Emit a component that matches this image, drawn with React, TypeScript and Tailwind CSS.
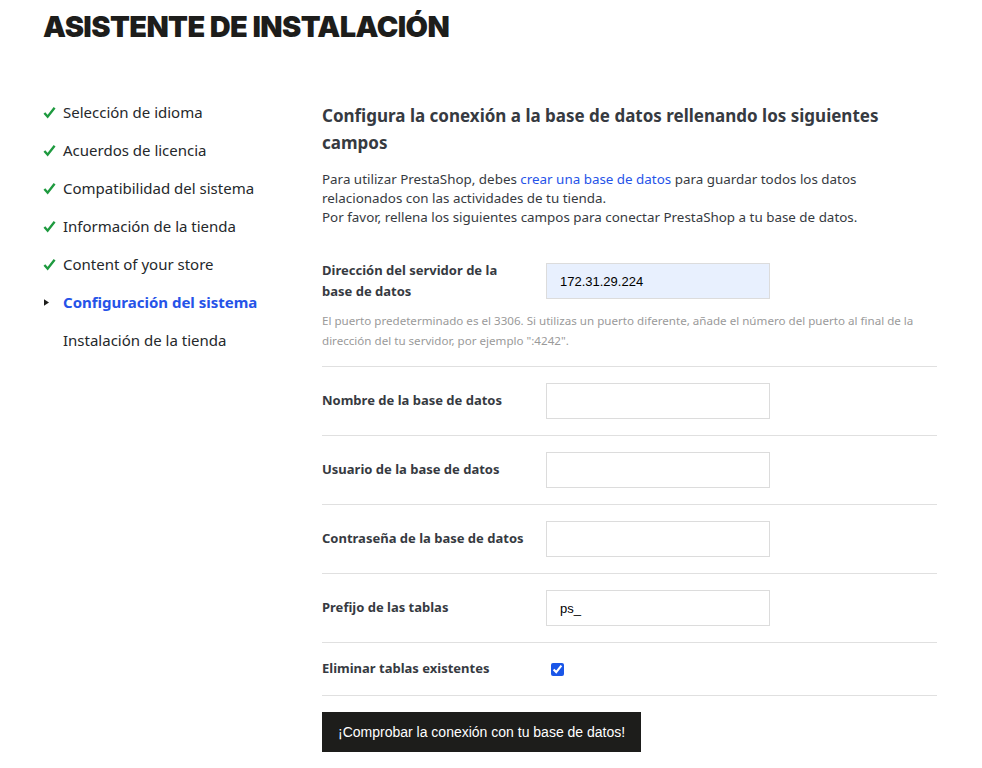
import React from 'react'

const steps = [
  { label: 'Selección de idioma', done: true },
  { label: 'Acuerdos de licencia', done: true },
  { label: 'Compatibilidad del sistema', done: true },
  { label: 'Información de la tienda', done: true },
  { label: 'Content of your store', done: true },
  { label: 'Configuración del sistema', current: true },
  { label: 'Instalación de la tienda' },
]

const fields = [
  { label: 'Nombre de la base de datos', value: '' },
  { label: 'Usuario de la base de datos', value: '' },
  { label: 'Contraseña de la base de datos', value: '', type: 'password' },
  { label: 'Prefijo de las tablas', value: 'ps_' },
]

const body = { fontFamily: '"Noto Sans", "Open Sans", sans-serif' }

export default function App() {
  return (
    <div className="min-h-screen bg-white text-[#363a41]" style={body}>
      <h1 className="pl-[43px] pt-[9px] text-[29px] leading-[36px] font-black tracking-[-0.6px] text-[#1d1d1b] font-['Inter',sans-serif]">
        ASISTENTE DE INSTALACIÓN
      </h1>

      <div className="flex pl-[43px] pt-[48px]">
        {/* Steps */}
        <ul className="w-[279px] shrink-0 text-[15px] leading-[22px]">
          {steps.map(step => (
            <li key={step.label} className="flex items-center h-[38px]">
              <span className="w-[20px] flex items-center">
                {step.done && (
                  <svg viewBox="0 0 14 14" className="w-[13px] h-[13px]">
                    <path d="M1.5 7.5 L5 11.5 L12.5 2" fill="none" stroke="#1e9a3f" strokeWidth="2.6" />
                  </svg>
                )}
                {step.current && (
                  <svg viewBox="0 0 6 8" className="w-[5px] h-[7px] ml-[1px]">
                    <path d="M0 0 L6 4 L0 8 Z" fill="#1d1d1b" />
                  </svg>
                )}
              </span>
              <span className={step.current ? 'font-bold text-[#2553e8]' : 'text-[#25282b]'}>{step.label}</span>
            </li>
          ))}
        </ul>

        {/* Form */}
        <div className="w-[615px]">
          <h2 className="text-[17px] leading-[27px] font-bold text-[#363a41] mt-[9px]">
            Configura la conexión a la base de datos rellenando los siguientes campos
          </h2>
          <p className="mt-[14px] text-[13.4px] leading-[19px] text-[#363a41]">
            Para utilizar PrestaShop, debes <a className="text-[#2553e8]">crear una base de datos</a> para guardar todos los datos
            relacionados con las actividades de tu tienda.
            <br />
            Por favor, rellena los siguientes campos para conectar PrestaShop a tu base de datos.
          </p>

          <div className="mt-[33px] border-b border-[#e0e0e0] pb-[15px]">
            <div className="flex items-center">
              <label className="w-[224px] text-[13px] leading-[21px] font-bold pr-4">
                Dirección del servidor de la base de datos
              </label>
              <input
                defaultValue="172.31.29.224"
                className="w-[224px] h-[36px] px-[13px] bg-[#e8f0fe] border border-[#dcdcdc] text-[13px] text-black font-['Liberation_Sans',sans-serif] outline-none"
              />
            </div>
            <p className="mt-[9px] text-[11.6px] leading-[20px] text-[#9a9a9a] pr-[20px]">
              El puerto predeterminado es el 3306. Si utilizas un puerto diferente, añade el número del puerto al final de la
              dirección del tu servidor, por ejemplo ":4242".
            </p>
          </div>

          {fields.map(f => (
            <div key={f.label} className="flex items-center h-[69px] border-b border-[#e0e0e0]">
              <label className="w-[224px] text-[13px] font-bold">{f.label}</label>
              <input
                type={f.type ?? 'text'}
                defaultValue={f.value}
                className="w-[224px] h-[36px] px-[13px] bg-white border border-[#dcdcdc] text-[13px] text-black font-['Liberation_Sans',sans-serif] outline-none"
              />
            </div>
          ))}

          <div className="flex items-center h-[53px] border-b border-[#e0e0e0]">
            <label className="w-[229px] text-[13px] font-bold">Eliminar tablas existentes</label>
            <input type="checkbox" defaultChecked className="w-[13px] h-[13px] accent-[#1a56e8]" />
          </div>

          <button className="mt-[16px] h-[40px] px-[16px] bg-[#1d1d1b] text-white text-[14px] font-['Liberation_Sans',sans-serif]">
            ¡Comprobar la conexión con tu base de datos!
          </button>
        </div>
      </div>
    </div>
  )
}
